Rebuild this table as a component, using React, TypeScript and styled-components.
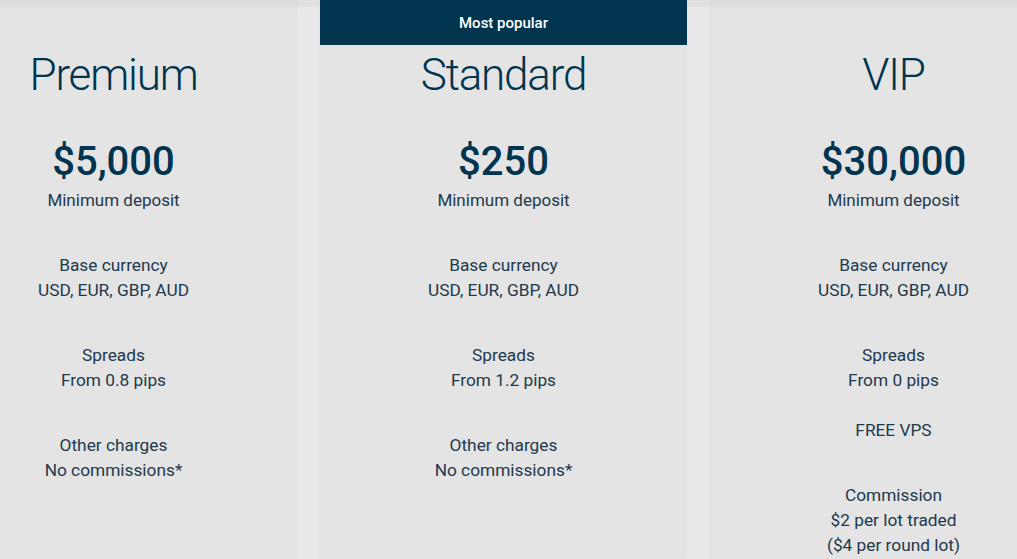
import React from "react";
import styled, { createGlobalStyle } from "styled-components";

const GlobalStyle = createGlobalStyle`
  html, body {
    margin: 0;
    padding: 0;
    background: #e9e9eb;
    overflow: hidden;
  }
  body {
    font-family: Roboto, "Liberation Sans", Arial, sans-serif;
  }
`;

const Page = styled.div`
  width: 1017px;
  height: 559px;
  overflow: hidden;
  background: linear-gradient(#dfe0e0 0 7px, #e9e9eb 7px);
`;

const Row = styled.div`
  width: 1007px;
  display: flex;
  justify-content: center;
  gap: 23px;
`;

const Card = styled.div`
  flex: 0 0 367px;
  height: 559px;
  box-sizing: border-box;
  display: flex;
  flex-direction: column;
  align-items: center;
  text-align: center;
  background: linear-gradient(#dcdddd 0 7px, #e1e2e3 7px 14px, #e4e4e4 14px);
  box-shadow: 0 0 3px rgba(0, 0, 0, 0.04);
`;

const Badge = styled.div<{ $hidden?: boolean }>`
  align-self: stretch;
  height: 45px;
  display: flex;
  align-items: center;
  justify-content: center;
  background: ${(p) => (p.$hidden ? "transparent" : "#00344f")};
  color: #ffffff;
  font-size: 15px;
  font-weight: 500;
  visibility: ${(p) => (p.$hidden ? "hidden" : "visible")};
`;

const Title = styled.h2`
  margin: 0;
  font-size: 44px;
  line-height: 60px;
  font-weight: 300;
  letter-spacing: -1.2px;
  color: #00344f;
`;

const Price = styled.div`
  margin-top: 34px;
  font-size: 40px;
  line-height: 46px;
  font-weight: 500;
  color: #00344f;
`;

const PriceNote = styled.div`
  margin-top: 3px;
  font-size: 17px;
  line-height: 24px;
  color: #22394d;
`;

const Features = styled.div`
  margin-top: 41px;
  display: flex;
  flex-direction: column;
  gap: 40px;
`;

const Feature = styled.div`
  font-size: 17.3px;
  line-height: 25px;
  color: #22394d;
`;

const Line = styled.div<{ $gap?: number }>`
  margin-top: ${(p) => (p.$gap ? `${p.$gap}px` : "0")};
`;

type Plan = {
  name: string;
  price: string;
  featured?: boolean;
  features: { lines: string[]; extra?: string }[];
};

const plans: Plan[] = [
  {
    name: "Premium",
    price: "$5,000",
    features: [
      { lines: ["Base currency", "USD, EUR, GBP, AUD"] },
      { lines: ["Spreads", "From 0.8 pips"] },
      { lines: ["Other charges", "No commissions*"] },
    ],
  },
  {
    name: "Standard",
    price: "$250",
    featured: true,
    features: [
      { lines: ["Base currency", "USD, EUR, GBP, AUD"] },
      { lines: ["Spreads", "From 1.2 pips"] },
      { lines: ["Other charges", "No commissions*"] },
    ],
  },
  {
    name: "VIP",
    price: "$30,000",
    features: [
      { lines: ["Base currency", "USD, EUR, GBP, AUD"] },
      { lines: ["Spreads", "From 0 pips"], extra: "FREE VPS" },
      { lines: ["Commission", "$2 per lot traded", "($4 per round lot)"] },
    ],
  },
];

export default function App() {
  return (
    <>
      <GlobalStyle />
      <Page>
        <Row>
          {plans.map((plan) => (
            <Card key={plan.name}>
              <Badge $hidden={!plan.featured}>Most popular</Badge>
              <Title>{plan.name}</Title>
              <Price>{plan.price}</Price>
              <PriceNote>Minimum deposit</PriceNote>
              <Features>
                {plan.features.map((f, i) => (
                  <Feature key={i}>
                    {f.lines.map((l) => (
                      <Line key={l}>{l}</Line>
                    ))}
                    {f.extra && <Line $gap={25}>{f.extra}</Line>}
                  </Feature>
                ))}
              </Features>
            </Card>
          ))}
        </Row>
      </Page>
    </>
  );
}
